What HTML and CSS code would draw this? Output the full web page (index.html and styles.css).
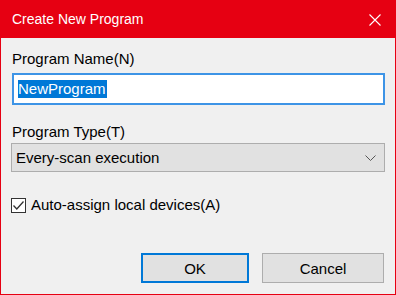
FILE: index.html
```html
<!DOCTYPE html>
<html lang="en">
<head>
    <meta charset="UTF-8">
    <title>Create New Program</title>
    <link rel="stylesheet" href="styles.css">
</head>
<body>
    <div class="dialog">
        <div class="title-bar">
            <span class="title">Create New Program</span>
            <svg class="close-btn" width="12" height="12" viewBox="0 0 12 12">
                <path d="M0.5 0.5 L11.5 11.5 M11.5 0.5 L0.5 11.5" stroke="#fff" stroke-width="1.1" fill="none"/>
            </svg>
        </div>

        <div class="content">
            <label class="field-label">Program Name(N)</label>
            <div class="name-input">
                <span class="selected-text">NewProgram</span>
            </div>

            <label class="field-label type-label">Program Type(T)</label>
            <div class="type-select">
                <span>Every-scan execution</span>
                <svg width="11" height="6" viewBox="0 0 11 6">
                    <path d="M0.5 0.5 L5.5 5.5 L10.5 0.5" stroke="#555" stroke-width="1" fill="none"/>
                </svg>
            </div>

            <div class="check-row">
                <span class="check-box">
                    <svg width="13" height="13" viewBox="0 0 13 13">
                        <path d="M1.5 6.5 L4.8 10 L11.5 2.5" stroke="#333" stroke-width="1.3" fill="none"/>
                    </svg>
                </span>
                <span>Auto-assign local devices(A)</span>
            </div>

            <div class="buttons">
                <button class="btn btn-default">OK</button>
                <button class="btn btn-cancel">Cancel</button>
            </div>
        </div>
    </div>
</body>
</html>
```

FILE: styles.css
```css
* {
    margin: 0;
    padding: 0;
    box-sizing: border-box;
}

body {
    font-family: "Liberation Sans", Arial, sans-serif;
    font-size: 15px;
    color: #000;
    background: #f0f0f0;
}

.dialog {
    width: 396px;
    height: 295px;
    display: flex;
    flex-direction: column;
    border: 1px solid #e60012;
    border-top: none;
    background: #f0f0f0;
}

.title-bar {
    height: 38px;
    margin: 0 -1px;
    padding: 0 15px 0 12px;
    background: #e60012;
    color: #fff;
    display: flex;
    align-items: center;
    justify-content: space-between;
}

.title {
    font-size: 14px;
    padding-bottom: 1px;
}

.close-btn {
    margin-top: 1px;
}

.content {
    flex: 1;
    display: flex;
    flex-direction: column;
    padding: 12px 10px 0 10px;
}

.field-label {
    display: block;
    line-height: 18px;
    padding-left: 1px;
}

.name-input {
    margin-top: 5px;
    height: 32px;
    margin-left: 1px;
    border: 2px solid #3d94e6;
    background: #fff;
    display: flex;
    align-items: center;
    padding-left: 4px;
}

.selected-text {
    background: #0078d7;
    color: #fff;
    line-height: 18px;
    padding-right: 1px;
}

.type-label {
    margin-top: 18px;
}

.type-select {
    margin-top: 2px;
    height: 29px;
    border: 1px solid #adadad;
    background: #e1e1e1;
    display: flex;
    align-items: center;
    justify-content: space-between;
    padding: 0 8px 0 4px;
}

.check-row {
    margin-top: 24px;
    display: flex;
    align-items: center;
    gap: 5px;
    line-height: 18px;
}

.check-box {
    width: 15px;
    height: 15px;
    border: 1px solid #333;
    background: #fff;
    display: flex;
    align-items: center;
    justify-content: center;
}

.buttons {
    margin-top: auto;
    margin-bottom: 11px;
    display: flex;
    justify-content: flex-end;
    gap: 13px;
    padding-right: 1px;
}

.btn {
    height: 30px;
    font-family: inherit;
    font-size: 15px;
    color: #000;
    background: #e1e1e1;
    border: 1px solid #adadad;
}

.btn-default {
    width: 108px;
    border: 2px solid #0078d7;
}

.btn-cancel {
    width: 122px;
}
```
